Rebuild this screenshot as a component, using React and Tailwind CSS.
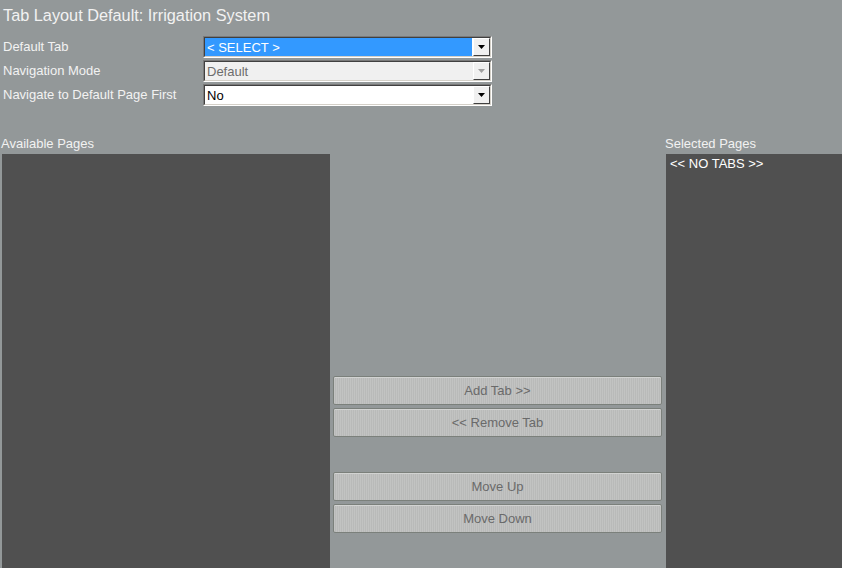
// ── Pieces ───────────────────────────────────────────────────────────────────

function Arrow({ disabled }) {
  return (
    <div className="w-[17px] h-[18px] flex items-center justify-center bg-[#f0f0f0] border border-t-white border-l-white border-b-[#404040] border-r-[#404040]">
      <svg width="7" height="4" viewBox="0 0 7 4">
        <path d="M0 0h7L3.5 4z" fill={disabled ? '#a0a0a0' : '#000'} />
      </svg>
    </div>
  );
}

function Select({ value, highlighted, disabled }) {
  const fill = highlighted ? 'bg-[#3399ff] text-white' : disabled ? 'bg-[#f0f0f0] text-[#6d6d6d]' : 'bg-white text-black';
  return (
    <div className="w-[289px] h-[22px] border border-t-[#7a7a7a] border-l-[#7a7a7a] border-b-white border-r-white">
      <div className={`h-full flex items-center border border-t-[#404040] border-l-[#404040] border-b-[#d4d0c8] border-r-[#d4d0c8] ${disabled ? 'bg-[#f0f0f0]' : 'bg-white'}`}>
        <div className={`flex-1 h-full flex items-center px-[2px] ${fill} ${highlighted ? 'mr-[1px]' : ''}`}>
          <span className="text-[13px] leading-none">{value}</span>
        </div>
        <Arrow disabled={disabled} />
      </div>
    </div>
  );
}

function Row({ label, children }) {
  return (
    <div className="flex items-center h-[24px]">
      <span className="w-[203px] pl-[3px] text-[13px] leading-[16px] text-[#f2f2f2]">{label}</span>
      {children}
    </div>
  );
}

function Btn({ children, className = '' }) {
  return (
    <button className={`h-[29px] w-full rounded-[2px] border border-[#7b807b] text-[13px] text-[#6a6a6a] bg-[#bdbebd] bg-[repeating-linear-gradient(90deg,#c2c3c2_0px,#c2c3c2_1px,#b9bab9_1px,#b9bab9_2px)] shadow-[inset_0_1px_0_#d2d3d2] ${className}`}>
      {children}
    </button>
  );
}

// ── Component ────────────────────────────────────────────────────────────────

export default function App() {
  return (
    <div className="w-[842px] h-[568px] overflow-hidden bg-[#939899] font-['Liberation_Sans',Arial,sans-serif] flex flex-col">
      <h1 className="pl-[3px] pt-[4px] h-[35px] text-[16.3px] leading-[22px] text-[#f2f2f2]">
        Tab Layout Default: Irrigation System
      </h1>

      <div className="flex flex-col">
        <Row label="Default Tab"><Select value="< SELECT >" highlighted /></Row>
        <Row label="Navigation Mode"><Select value="Default" disabled /></Row>
        <Row label="Navigate to Default Page First"><Select value="No" /></Row>
      </div>

      <div className="flex flex-1 mt-[31px] min-h-0">
        {/* Available */}
        <div className="w-[330px] flex flex-col">
          <span className="pl-[1px] h-[16px] text-[13px] leading-[12px] text-[#f2f2f2]">Available Pages</span>
          <div className="flex-1 ml-[2px] bg-[#505050]" />
        </div>

        {/* Actions */}
        <div className="w-[336px] flex flex-col pt-[238px] pl-[3px] pr-[4px]">
          <Btn>Add Tab &gt;&gt;</Btn>
          <Btn className="mt-[3px]">&lt;&lt; Remove Tab</Btn>
          <Btn className="mt-[35px]">Move Up</Btn>
          <Btn className="mt-[3px]">Move Down</Btn>
        </div>

        {/* Selected */}
        <div className="flex-1 flex flex-col">
          <span className="-ml-[1px] h-[16px] text-[13px] leading-[12px] text-[#f2f2f2]">Selected Pages</span>
          <div className="flex-1 bg-[#505050] pl-[4px] pt-[3px]">
            <span className="block text-[13px] leading-[14px] text-white">&lt;&lt; NO TABS &gt;&gt;</span>
          </div>
        </div>
      </div>
    </div>
  );
}
